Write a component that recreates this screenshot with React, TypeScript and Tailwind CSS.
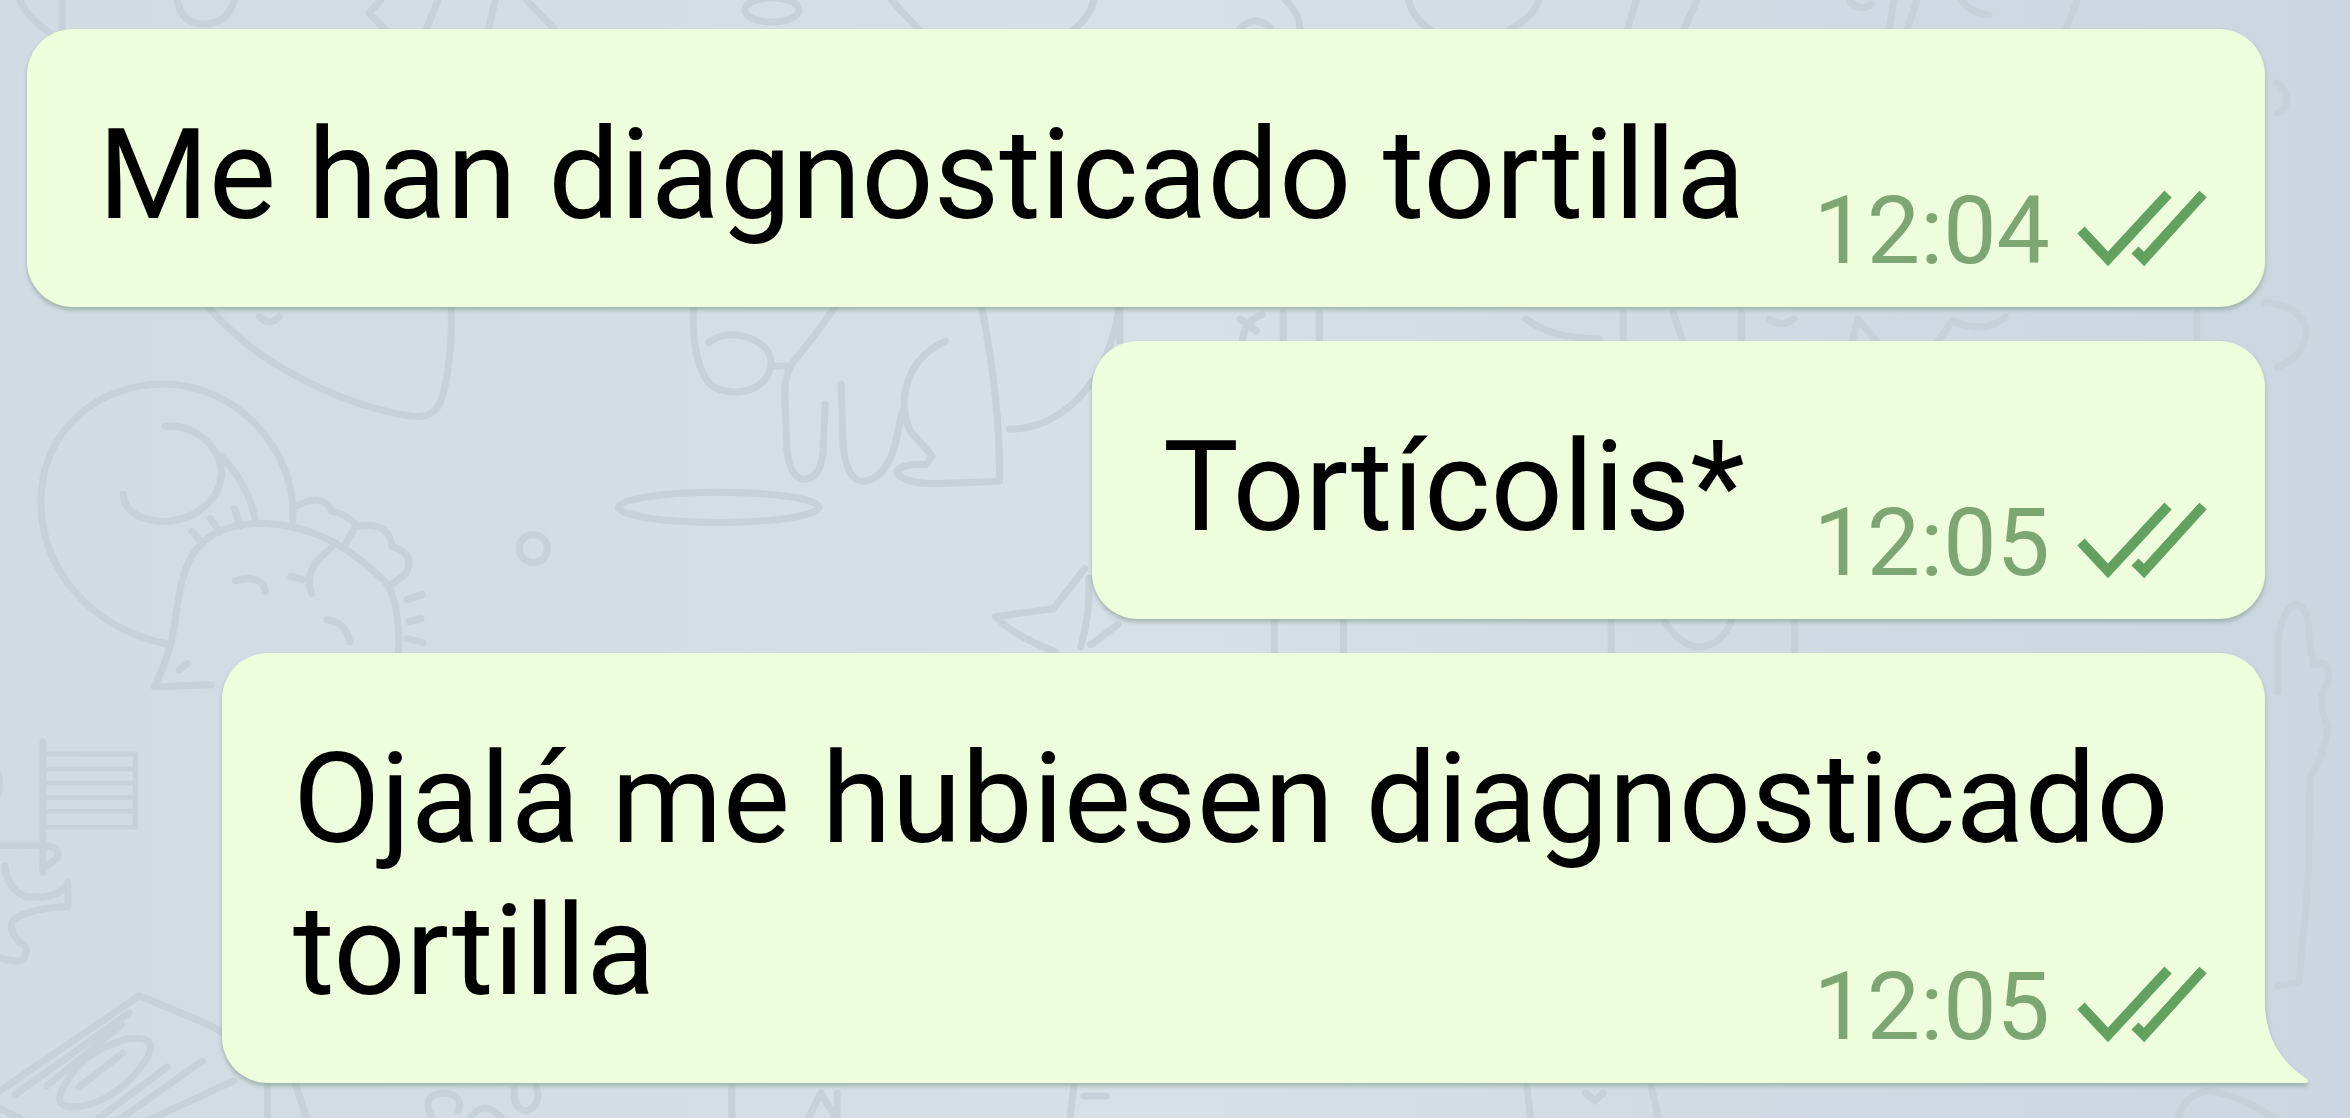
import React from 'react';

type Message = {
  id: number;
  text: string;
  time: string;
};

const messages: Message[] = [
  { id: 1, text: 'Me han diagnosticado tortilla', time: '12:04' },
  { id: 2, text: 'Tortícolis*', time: '12:05' },
  { id: 3, text: 'Ojalá me hubiesen diagnosticado tortilla', time: '12:05' },
];

const ReadChecks = () => (
  <svg
    role="img"
    aria-label="Leído"
    viewBox="0 0 132 78"
    className="w-[132px] h-[78px] mb-5 shrink-0"
    fill="none"
    stroke="#62a160"
    strokeWidth="10"
  >
    <path d="M5 41 L32 70 L92 5" />
    <path d="M59 61 L68 70 L127 5" />
  </svg>
);

const BubbleTail = () => (
  <svg
    aria-hidden="true"
    viewBox="0 0 46 78"
    className="absolute left-full bottom-0 w-[46px] h-[78px] -ml-px"
    fill="#eefedd"
  >
    <path d="M0 0 H1 C2 32 16 56 43 74 Q46 77 42 78 H0 Z" />
  </svg>
);

const Bubble = ({ message, last }: { message: Message; last: boolean }) => (
  <li
    className={`relative bg-[#eefedd] pl-[71px] pr-[57px] pt-[70px] pb-14 rounded-[46px] drop-shadow-[0_3px_2px_rgba(110,140,115,0.5)] ${
      last ? 'rounded-br-none max-w-[91%]' : 'max-w-full'
    }`}
  >
    <p className="text-[127px] leading-[152px] text-black">
      {message.text}
      {/* keeps room for the time on the last line */}
      <span aria-hidden="true" className="inline-block w-[463px]" />
    </p>
    <div className="absolute right-[57px] bottom-5 flex items-end gap-[26px]">
      <time className="text-[95px] leading-[112px] text-[#7da673]">{message.time}</time>
      <ReadChecks />
    </div>
    {last && <BubbleTail />}
  </li>
);

const Wallpaper = () => (
  <svg
    aria-hidden="true"
    viewBox="0 0 2350 1118"
    preserveAspectRatio="xMidYMid slice"
    className="absolute inset-0 w-full h-full"
    fill="none"
    stroke="#c6d1d9"
    strokeWidth="7"
    strokeLinecap="round"
    strokeLinejoin="round"
  >
    {/* top edge */}
    <path d="M23 0 Q30 18 52 32 M65 0 V30 M180 0 Q184 24 206 24 Q230 24 237 0" />
    <path d="M383 0 L371 13 L388 30 M440 0 L428 30 M497 0 L490 30 M528 0 L557 30" />
    <ellipse cx="773" cy="10" rx="27" ry="12" />
    <path d="M892 0 L920 30 M1094 0 Q1090 18 1073 30" />
    <path d="M1240 28 Q1256 14 1270 28 M1285 0 Q1299 12 1300 30 M1408 0 Q1412 18 1430 30 M1538 0 Q1534 16 1508 30" />
    <path d="M1635 0 L1626 30 M1696 0 L1682 30 M1848 2 Q1860 12 1870 4" />
    <path d="M1892 0 L1887 30 M1915 0 L1905 30 M1959 0 Q1968 13 1987 15 M2075 0 L2063 30" />

    {/* guitar pick */}
    <path d="M205 300 Q236 335 268 357 Q344 405 413 415 Q436 418 443 400 Q455 360 453 300" />
    <path d="M262 316 Q272 326 282 316" />

    {/* unicorn */}
    <path d="M168 642 C90 625 44 565 44 500 C44 430 100 383 166 383 C240 383 300 450 295 520" />
    <path d="M168 425 C200 422 226 450 224 474 C221 502 194 520 165 520 C140 519 127 508 126 493" />
    <path d="M224 455 Q252 485 258 520" />
    <path d="M214 683 L157 685 Q172 655 177 625 C184 570 190 523 262 522 C320 522 360 553 390 583 Q404 612 400 660" />
    <path d="M298 505 Q325 490 334 510 Q348 512 360 525 Q392 520 394 545 Q418 552 408 572 L394 583 M348 542 L356 528" />
    <path d="M333 547 Q304 568 314 592 M293 575 L306 578" />
    <path d="M238 579 Q264 572 268 590 M329 618 Q348 620 352 640 M182 668 L190 662" />
    <path d="M195 530 L205 542 M213 517 L222 531 M237 507 L243 525 M409 598 L424 593 M411 620 L423 617 M409 637 L425 641" />
    <ellipse cx="535" cy="547" rx="14" ry="14" />

    {/* dog */}
    <path d="M695 300 Q692 350 706 376 Q714 391 737 391 C762 390 773 374 772 360 C771 344 750 333 728 334 Q718 335 710 342" />
    <path d="M840 300 Q818 333 795 360 Q784 375 786 400 L788 450 Q792 478 806 478 Q822 476 824 450 L826 403" />
    <path d="M772 365 H788 M842 383 L844 445 Q848 480 864 480 Q886 478 896 443 L903 410" />
    <path d="M946 340 C905 360 898 400 911 430 L933 455 L927 463 Q896 463 898 472 Q906 484 948 482 L1000 480 Q1001 400 981 300" />
    <path d="M1010 428 C1060 428 1110 385 1120 300" />
    <ellipse cx="720" cy="506" rx="100" ry="15" />

    {/* star */}
    <path d="M1085 567 L1054 607 L996 615 Q1015 635 1056 650 M1089 577 Q1091 610 1081 645 M1118 623 L1091 643" />

    {/* between the bubbles */}
    <path d="M1120 300 V340 M1242 340 Q1245 318 1262 314 M1240 318 L1256 330 M1283 312 V342 M1319 312 V342" />
    <path d="M1525 318 Q1550 338 1598 338 M1622 312 V342 M1672 312 L1682 342 M1740 312 V342 M1768 318 Q1780 328 1792 318" />
    <path d="M1850 342 L1856 318 L1876 342 M1935 342 L1950 320 Q1985 334 2003 316 M2194 312 V342" />
    <path d="M2262 302 Q2300 304 2303 332 Q2300 358 2274 366" />
    <path d="M1274 620 V652 M1343 620 V652 M1610 620 V652 M1663 620 Q1680 645 1698 645 Q1718 645 1730 620 M1793 620 V652" />

    {/* right edge */}
    <path d="M2274 83 Q2284 90 2284 100 Q2282 110 2274 113" />
    <path d="M2275 690 V640 Q2280 604 2294 603 Q2307 606 2306 640 L2311 663 Q2328 655 2325 681 Q2312 698 2325 724 Q2322 752 2307 775 L2305 880 L2296 980 L2275 983" />
    <path d="M2174 1118 Q2182 1090 2206 1088 Q2240 1092 2275 1118" />

    {/* flag */}
    <path d="M46 740 V870" />
    <path d="M48 752 H138 V825 H48 M52 767 H134 M52 781 H134 M52 795 H134 M52 809 H134" strokeWidth="5" />
    <path d="M0 843 H38 Q66 842 60 856 L46 867 M8 864 Q10 886 28 894 Q62 898 71 880 L71 904 Q30 906 16 918 Q10 930 29 945 Q32 966 0 954" />
    <path d="M0 768 Q5 780 0 796" />

    {/* banknotes */}
    <path d="M0 1090 L142 993 L214 1023 L240 1040 M18 1092 L132 1010 M50 1083 L124 1022" />
    <path d="M64 1090 Q80 1050 130 1036 Q162 1032 150 1055 Q120 1100 78 1104 Q58 1104 64 1090 Z M82 1084 L126 1050" />
    <path d="M98 1118 L170 1064 M120 1118 L205 1058 M150 1118 L236 1078 M0 1104 L28 1118" />

    {/* bottom edge */}
    <path d="M270 1076 V1118 M296 1076 L310 1118" />
    <path d="M436 1118 Q420 1092 446 1090 Q466 1092 460 1108 M470 1118 Q486 1092 506 1118 M516 1086 Q514 1108 530 1108 Q544 1100 538 1084" />
    <path d="M733 1084 V1118 M808 1118 L822 1090 L838 1118 M838 1090 V1118 M1074 1084 L1070 1118 M1084 1093 H1106" />
    <path d="M1526 1084 L1530 1118 M1584 1090 L1594 1098 L1602 1090 M1650 1084 L1658 1118" />
  </svg>
);

export default function App() {
  return (
    <main className="relative min-h-screen overflow-hidden bg-linear-to-r from-[#d1dbe3] via-[#d7dfe7] to-[#cbd6e1] font-['Roboto',sans-serif]">
      <Wallpaper />
      <ul className="relative flex flex-col items-end gap-[34px] pt-[29px] pb-[38px] pl-5 pr-[85px]">
        {messages.map((message, i) => (
          <Bubble key={message.id} message={message} last={i === messages.length - 1} />
        ))}
      </ul>
    </main>
  );
}
